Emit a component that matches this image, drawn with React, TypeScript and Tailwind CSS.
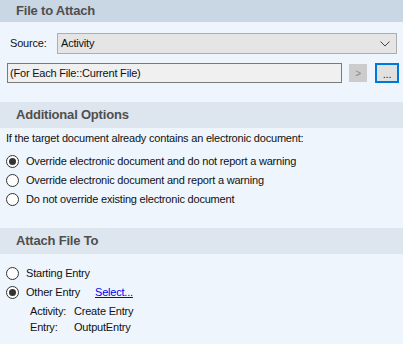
const FONT = "font-['Liberation_Sans',Arial,sans-serif]";

function SectionHeader({ title, active }: { title: string; active?: boolean }) {
  return (
    <div
      className={`flex items-center pl-4 text-[13px] font-bold text-[#4f4f4f] ${
        active ? 'h-[22px] bg-[#c9d6e4]' : 'h-[26px] bg-[#dde5ee]'
      }`}
    >
      {title}
    </div>
  );
}

function Radio({ label, checked }: { label: string; checked?: boolean }) {
  return (
    <div className="flex h-[19px] items-center pl-[6px]">
      <span className="flex h-[13px] w-[13px] items-center justify-center rounded-full border border-[#333] bg-white">
        {checked && <span className="h-[7px] w-[7px] rounded-full bg-[#333]" />}
      </span>
      <span className="ml-[7px]">{label}</span>
    </div>
  );
}

export default function App() {
  return (
    <div className={`h-[344px] w-[403px] overflow-hidden bg-[#eef5fd] text-[11px] tracking-[-0.2px] text-[#111] ${FONT}`}>
      {/* File to Attach */}
      <SectionHeader title="File to Attach" active />
      <div className="h-[80px] pt-[11px]">
        <div className="flex h-[21px] items-center">
          <span className="ml-[10px] w-[47px]">Source:</span>
          <div className="flex h-[21px] w-[340px] items-center justify-between border border-[#adadad] bg-[#e5e5e5] pl-[3px] pr-[6px]">
            <span>Activity</span>
            <svg width="10" height="6" viewBox="0 0 10 6" className="mt-[1px]">
              <polyline points="0.5,0.5 5,5 9.5,0.5" fill="none" stroke="#444" strokeWidth="1" />
            </svg>
          </div>
        </div>
        <div className="mt-[9px] flex h-[20px] items-center">
          <div className="ml-[7px] flex h-[20px] w-[335px] items-center border border-[#7a7a7a] bg-[#f0f0f0] pl-[2px]">
            (For Each File::Current File)
          </div>
          <div className="ml-[7px] flex h-[18px] w-[18px] items-center justify-center bg-[#cccccc] text-[10px] text-[#888]">
            &gt;
          </div>
          <div className="ml-[8px] flex h-[20px] w-[24px] items-end justify-center border-2 border-[#0078d7] bg-[#e1e1e1] pb-[1px] leading-[12px] text-[#222]">
            ...
          </div>
        </div>
      </div>

      {/* Additional Options */}
      <SectionHeader title="Additional Options" />
      <div className="h-[98px]">
        <div className="mt-[2px] flex h-[16px] items-center pl-[6px]">
          If the target document already contains an electronic document:
        </div>
        <div className="mt-[6px]">
          <Radio label="Override electronic document and do not report a warning" checked />
          <Radio label="Override electronic document and report a warning" />
          <Radio label="Do not override existing electronic document" />
        </div>
      </div>

      {/* Attach File To */}
      <SectionHeader title="Attach File To" />
      <div className="pt-[10px]">
        <Radio label="Starting Entry" />
        <div className="flex h-[19px] items-center pl-[6px]">
          <span className="flex h-[13px] w-[13px] items-center justify-center rounded-full border border-[#333] bg-white">
            <span className="h-[7px] w-[7px] rounded-full bg-[#333]" />
          </span>
          <span className="ml-[7px] w-[69px]">Other Entry</span>
          <span className="text-[#0000ee] underline">Select...</span>
        </div>
        <div className="mt-[1px] flex h-[16px] items-center pl-[30px]">
          <span className="w-[44px]">Activity:</span>
          <span>Create Entry</span>
        </div>
        <div className="flex h-[16px] items-center pl-[30px]">
          <span className="w-[44px]">Entry:</span>
          <span>OutputEntry</span>
        </div>
      </div>
    </div>
  );
}
